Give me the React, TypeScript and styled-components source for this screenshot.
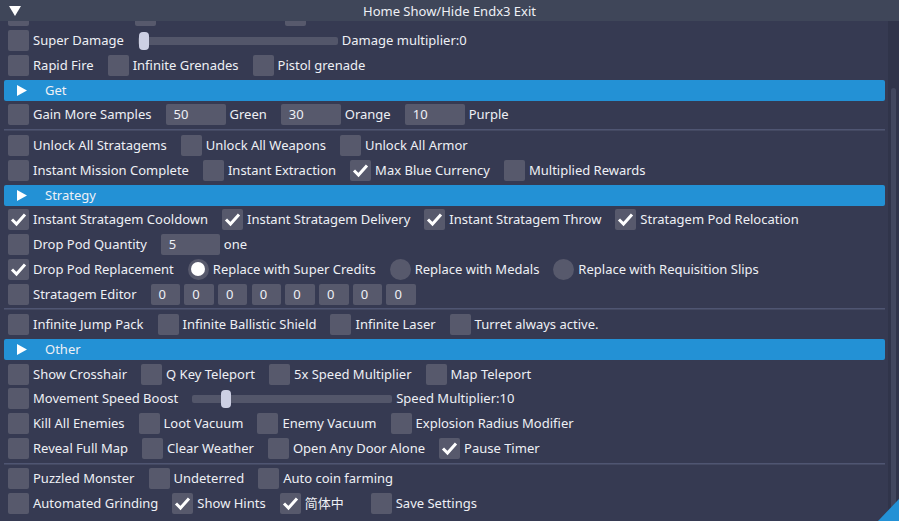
import React from "react";
import styled, { createGlobalStyle } from "styled-components";

const GlobalStyle = createGlobalStyle`
  html, body {
    margin: 0;
    padding: 0;
    background: #363a52;
  }
  body {
    font-family: "Noto Sans", "Noto Sans CJK SC", sans-serif;
    font-size: 13px;
    color: #eef0f5;
  }
  * {
    box-sizing: border-box;
  }
`;

const Window = styled.div`
  position: relative;
  width: 899px;
  height: 521px;
  display: flex;
  flex-direction: column;
  background: #363a52;
  overflow: hidden;
`;

const TitleBar = styled.div`
  flex: none;
  height: 21px;
  background: #3f4659;
  display: grid;
  grid-template-columns: 1fr auto 1fr;
  align-items: center;
`;

const TitleArrow = styled.div`
  padding-left: 9px;
  display: flex;
  align-items: center;
`;

const TitleText = styled.span`
  line-height: 22px;
`;

const Body = styled.div`
  flex: 1;
  min-height: 0;
  display: flex;
`;

const Content = styled.div`
  flex: 1;
  min-width: 0;
  overflow: hidden;
  padding: 0 3px 0 4px;
`;

// the window is scrolled to its end, so the first row is mostly hidden
const List = styled.div`
  display: flex;
  flex-direction: column;
  gap: 3.78px;
  margin-top: -15.6px;
`;

const Row = styled.div`
  height: 21px;
  padding-left: 4px;
  display: flex;
  align-items: center;
  gap: 14px;
  white-space: nowrap;
`;

const Item = styled.label`
  display: flex;
  align-items: center;
  gap: 4px;
  line-height: 21px;
`;

const Ghost = styled.span<{ $w: number }>`
  width: ${(p) => p.$w}px;
  height: 21px;
`;

const Box = styled.span`
  flex: none;
  width: 21px;
  height: 21px;
  border-radius: 2px;
  background: #57596c;
  display: flex;
  align-items: center;
  justify-content: center;
`;

const RadioDot = styled.span<{ $on?: boolean }>`
  flex: none;
  width: 21px;
  height: 21px;
  border-radius: 50%;
  background: #57596c;
  display: flex;
  align-items: center;
  justify-content: center;
  &::after {
    content: "";
    width: 14px;
    height: 14px;
    border-radius: 50%;
    background: ${(p) => (p.$on ? "#ffffff" : "transparent")};
  }
`;

const Field = styled.span<{ $w: number }>`
  flex: none;
  width: ${(p) => p.$w}px;
  height: 21px;
  border-radius: 2px;
  background: #57596c;
  padding-left: 8px;
  line-height: 21px;
`;

const FieldGroup = styled.div`
  display: flex;
  gap: 4.2px;
`;

const SliderFrame = styled.span`
  position: relative;
  flex: none;
  width: 200px;
  height: 21px;
  display: flex;
  align-items: center;
`;

const SliderRail = styled.span`
  width: 100%;
  height: 8px;
  border-radius: 2px;
  background: #53566a;
`;

const SliderGrab = styled.span`
  position: absolute;
  top: 1.5px;
  width: 10px;
  height: 18px;
  border-radius: 4px;
  background: #cdd0e4;
`;

const Header = styled.div`
  height: 21px;
  border-radius: 2px;
  background: #2391d5;
  padding-left: 13px;
  display: flex;
  align-items: center;
  gap: 18px;
  line-height: 21px;
`;

const Separator = styled.div`
  height: 2px;
  border-top: 1px solid #4f5572;
  border-bottom: 1px solid #444962;
`;

const ScrollTrack = styled.div`
  flex: none;
  width: 11px;
  background: #30344a;
  padding: 67px 3px 2px 3px;
  display: flex;
`;

const ScrollGrab = styled.div`
  flex: 1;
  border-radius: 3px;
  background: #42475e;
`;

const ResizeGrip = styled.svg`
  position: absolute;
  right: 0;
  bottom: 0;
`;

const CheckMark = () => (
  <svg width="21" height="21" viewBox="0 0 21 21">
    <polyline
      points="4,10.5 8.5,15 17,5.5"
      fill="none"
      stroke="#ffffff"
      strokeWidth="3"
      strokeLinejoin="miter"
    />
  </svg>
);

const Check = ({ label, on }: { label: string; on?: boolean }) => (
  <Item>
    <Box>{on && <CheckMark />}</Box>
    {label}
  </Item>
);

// checkbox of the clipped row: only the bottom of the box is in view
const ClippedCheck = ({ w }: { w: number }) => (
  <Item>
    <Box />
    <Ghost $w={w} />
  </Item>
);

const Radio = ({ label, on }: { label: string; on?: boolean }) => (
  <Item>
    <RadioDot $on={on} />
    {label}
  </Item>
);

const Input = ({ value, label, w = 60 }: { value: string; label?: string; w?: number }) => (
  <Item>
    <Field $w={w}>{value}</Field>
    {label}
  </Item>
);

const Slider = ({ fraction, label }: { fraction: number; label: string }) => (
  <Item>
    <SliderFrame>
      <SliderRail />
      <SliderGrab style={{ left: 1 + fraction * 188 }} />
    </SliderFrame>
    {label}
  </Item>
);

const Section = ({ title }: { title: string }) => (
  <Header>
    <svg width="10" height="11" viewBox="0 0 10 11">
      <polygon points="0,0 10,5.5 0,11" fill="#ffffff" />
    </svg>
    {title}
  </Header>
);

const App = () => (
  <>
    <GlobalStyle />
    <Window>
      <TitleBar>
        <TitleArrow>
          <svg width="12" height="10" viewBox="0 0 12 10">
            <polygon points="0,0 12,0 6,10" fill="#ffffff" />
          </svg>
        </TitleArrow>
        <TitleText>Home Show/Hide Endx3 Exit</TitleText>
        <span />
      </TitleBar>
      <Body>
        <Content>
          <List>
            <Row>
              <ClippedCheck w={88} />
              <ClippedCheck w={111} />
              <ClippedCheck w={90} />
            </Row>
            <Row>
              <Check label="Super Damage" />
              <Slider fraction={0} label="Damage multiplier:0" />
            </Row>
            <Row>
              <Check label="Rapid Fire" />
              <Check label="Infinite Grenades" />
              <Check label="Pistol grenade" />
            </Row>
            <Section title="Get" />
            <Row>
              <Check label="Gain More Samples" />
              <Input value="50" label="Green" />
              <Input value="30" label="Orange" />
              <Input value="10" label="Purple" />
            </Row>
            <Separator />
            <Row>
              <Check label="Unlock All Stratagems" />
              <Check label="Unlock All Weapons" />
              <Check label="Unlock All Armor" />
            </Row>
            <Row>
              <Check label="Instant Mission Complete" />
              <Check label="Instant Extraction" />
              <Check label="Max Blue Currency" on />
              <Check label="Multiplied Rewards" />
            </Row>
            <Section title="Strategy" />
            <Row>
              <Check label="Instant Stratagem Cooldown" on />
              <Check label="Instant Stratagem Delivery" on />
              <Check label="Instant Stratagem Throw" on />
              <Check label="Stratagem Pod Relocation" on />
            </Row>
            <Row>
              <Check label="Drop Pod Quantity" />
              <Input value="5" label="one" w={59} />
            </Row>
            <Row>
              <Check label="Drop Pod Replacement" on />
              <Radio label="Replace with Super Credits" on />
              <Radio label="Replace with Medals" />
              <Radio label="Replace with Requisition Slips" />
            </Row>
            <Row>
              <Check label="Stratagem Editor" />
              <FieldGroup>
                {[0, 0, 0, 0, 0, 0, 0, 0].map((v, i) => (
                  <Field key={i} $w={29.5}>
                    {v}
                  </Field>
                ))}
              </FieldGroup>
            </Row>
            <Separator />
            <Row>
              <Check label="Infinite Jump Pack" />
              <Check label="Infinite Ballistic Shield" />
              <Check label="Infinite Laser" />
              <Check label="Turret always active." />
            </Row>
            <Section title="Other" />
            <Row>
              <Check label="Show Crosshair" />
              <Check label="Q Key Teleport" />
              <Check label="5x Speed Multiplier" />
              <Check label="Map Teleport" />
            </Row>
            <Row>
              <Check label="Movement Speed Boost" />
              <Slider fraction={0.15} label="Speed Multiplier:10" />
            </Row>
            <Row>
              <Check label="Kill All Enemies" />
              <Check label="Loot Vacuum" />
              <Check label="Enemy Vacuum" />
              <Check label="Explosion Radius Modifier" />
            </Row>
            <Row>
              <Check label="Reveal Full Map" />
              <Check label="Clear Weather" />
              <Check label="Open Any Door Alone" />
              <Check label="Pause Timer" on />
            </Row>
            <Separator />
            <Row>
              <Check label="Puzzled Monster" />
              <Check label="Undeterred" />
              <Check label="Auto coin farming" />
            </Row>
            <Row>
              <Check label="Automated Grinding" />
              <Check label="Show Hints" on />
              <Check label={"简体中\u3000"} on />
              <Check label="Save Settings" />
            </Row>
          </List>
        </Content>
        <ScrollTrack>
          <ScrollGrab />
        </ScrollTrack>
      </Body>
      <ResizeGrip width="21" height="22" viewBox="0 0 21 22">
        <polygon points="21,0 21,22 0,22" fill="#2391d5" />
      </ResizeGrip>
    </Window>
  </>
);

export default App;
